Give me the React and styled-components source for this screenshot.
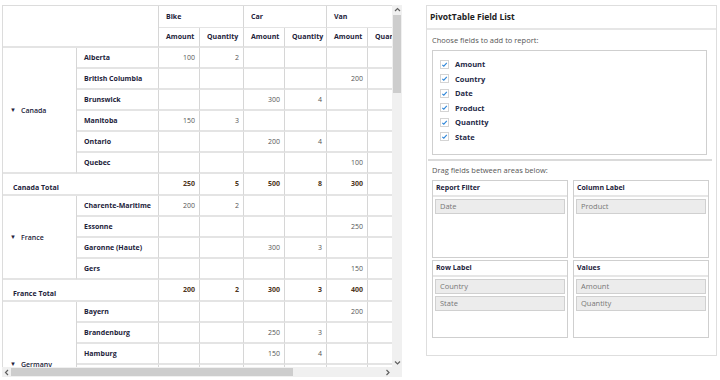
import React from "react";
import styled, { createGlobalStyle } from "styled-components";

const Global = createGlobalStyle`
  html, body { margin: 0; padding: 0; background: #fff; }
  body { font-family: "Open Sans", "Noto Sans", sans-serif; }
`;

const Page = styled.div`
  display: flex;
  align-items: flex-start;
  gap: 24px;
  padding: 5px 3px 0 2px;
  width: 720px;
  height: 380px;
  box-sizing: border-box;
`;

// ---------- pivot grid ----------

const GridFrame = styled.div`
  display: grid;
  grid-template-columns: 390px 10px;
  grid-template-rows: 362px 10px;
  width: 400px;
`;

const Viewport = styled.div`
  overflow: hidden;
  border-top: 1px solid #dcdcdc;
  border-left: 1px solid #dcdcdc;
`;

const Table = styled.table`
  border-collapse: separate;
  border-spacing: 0;
  table-layout: fixed;
  width: 406px;
  font-size: 7px;
  color: #222233;
`;

const Cell = styled.td`
  padding: 0;
  border-right: 1px solid #d6d6d6;
  border-bottom: ${(p) => (p.$thin ? "1px" : "2px")} solid #e4e4e4;
  vertical-align: ${(p) => p.$valign || "middle"};
  text-align: ${(p) => (p.$num ? "right" : "left")};
  font-weight: ${(p) => (p.$bold ? 700 : 400)};
  color: ${(p) => (p.$total ? "#4e3620" : p.$num ? "#555" : "#22223a")};
  white-space: nowrap;
  overflow: hidden;
`;

const Inner = styled.div`
  height: ${(p) => p.$h}px;
  line-height: ${(p) => p.$h}px;
  padding: ${(p) => (p.$num ? "0 4px 0 0" : "0 0 0 7px")};
  box-sizing: border-box;
`;

const GroupLabel = styled.div`
  padding-left: 7px;
  font-weight: 600;
`;

const TotalLabel = styled.div`
  height: 20px;
  padding: 9px 0 0 10px;
  box-sizing: border-box;
  line-height: 10px;
`;

const Caret = styled.span`
  font-size: 6px;
  margin-right: 5px;
  position: relative;
  top: -1px;
`;

const VScroll = styled.div`
  background: #f0f0f0;
  display: flex;
  flex-direction: column;
  align-items: center;
  justify-content: space-between;
  position: relative;
`;

const VThumb = styled.div`
  position: absolute;
  top: 10px;
  left: 1px;
  width: 8px;
  height: 78px;
  background: #cdcdcd;
`;

const HScroll = styled.div`
  background: #f0f0f0;
  display: flex;
  align-items: center;
  justify-content: space-between;
  position: relative;
`;

const HThumb = styled.div`
  position: absolute;
  left: 9px;
  top: 1px;
  height: 8px;
  width: 282px;
  background: #cdcdcd;
`;

const Corner = styled.div`
  background: #f0f0f0;
`;

const Arrow = ({ dir }) => {
  const pts = {
    up: "2,6 4.5,3.5 7,6",
    down: "2,3.5 4.5,6 7,3.5",
    left: "6,2 3.5,4.5 6,7",
    right: "3.5,2 6,4.5 3.5,7",
  }[dir];
  return (
    <svg width="9" height="9" viewBox="0 0 9 9" style={{ position: "relative", zIndex: 1 }}>
      <polyline points={pts} fill="none" stroke="#606060" strokeWidth="1.2" />
    </svg>
  );
};

const cols = [74, 82, 41, 44, 41, 42, 41, 41];

const groups = [
  {
    name: "Canada",
    rows: [
      ["Alberta", [100, 2, "", "", "", ""]],
      ["British Columbia", ["", "", "", "", 200, ""]],
      ["Brunswick", ["", "", 300, 4, "", ""]],
      ["Manitoba", [150, 3, "", "", "", ""]],
      ["Ontario", ["", "", 200, 4, "", ""]],
      ["Quebec", ["", "", "", "", 100, ""]],
    ],
    total: [250, 5, 500, 8, 300, 3],
  },
  {
    name: "France",
    rows: [
      ["Charente-Maritime", [200, 2, "", "", "", ""]],
      ["Essonne", ["", "", "", "", 250, ""]],
      ["Garonne (Haute)", ["", "", 300, 3, "", ""]],
      ["Gers", ["", "", "", "", 150, ""]],
    ],
    total: [200, 2, 300, 3, 400, 5],
  },
  {
    name: "Germany",
    rows: [
      ["Bayern", ["", "", "", "", 200, ""]],
      ["Brandenburg", ["", "", 250, 3, "", ""]],
      ["Hamburg", ["", "", 150, 4, "", ""]],
      ["Hessen", [300, 2, "", "", "", ""]],
      ["Niedersachsen", ["", "", "", "", 100, ""]],
      ["Saarland", ["", "", 200, 1, "", ""]],
    ],
    total: [300, 2, 600, 8, 300, 4],
  },
];

const PivotGrid = () => (
  <GridFrame>
    <Viewport>
      <Table>
        <colgroup>
          {cols.map((w, i) => (
            <col key={i} style={{ width: w }} />
          ))}
        </colgroup>
        <thead>
          <tr>
            <Cell as="th" colSpan={2} rowSpan={2} />
            {["Bike", "Car", "Van"].map((p) => (
              <Cell as="th" key={p} colSpan={2} $bold $thin>
                <Inner $h={21}>{p}</Inner>
              </Cell>
            ))}
          </tr>
          <tr>
            {[0, 1, 2].flatMap((i) => [
              <Cell as="th" key={"a" + i} $bold>
                <Inner $h={18}>Amount</Inner>
              </Cell>,
              <Cell as="th" key={"q" + i} $bold>
                <Inner $h={18}>Quantity</Inner>
              </Cell>,
            ])}
          </tr>
        </thead>
        <tbody>
          {groups.map((g) => (
            <React.Fragment key={g.name}>
              {g.rows.map(([state, vals], ri) => (
                <tr key={state}>
                  {ri === 0 && (
                    <Cell rowSpan={g.rows.length}>
                      <GroupLabel>
                        <Caret>▼</Caret>
                        {g.name}
                      </GroupLabel>
                    </Cell>
                  )}
                  <Cell $bold>
                    <Inner $h={19}>{state}</Inner>
                  </Cell>
                  {vals.map((v, vi) => (
                    <Cell key={vi} $num>
                      <Inner $h={19} $num>
                        {v}
                      </Inner>
                    </Cell>
                  ))}
                </tr>
              ))}
              <tr>
                <Cell colSpan={2} $bold>
                  <TotalLabel>{g.name} Total</TotalLabel>
                </Cell>
                {g.total.map((v, vi) => (
                  <Cell key={vi} $num $bold $total>
                    <Inner $h={20} $num>
                      {v}
                    </Inner>
                  </Cell>
                ))}
              </tr>
            </React.Fragment>
          ))}
        </tbody>
      </Table>
    </Viewport>
    <VScroll>
      <VThumb />
      <Arrow dir="up" />
      <Arrow dir="down" />
    </VScroll>
    <HScroll>
      <HThumb />
      <Arrow dir="left" />
      <Arrow dir="right" />
    </HScroll>
    <Corner />
  </GridFrame>
);

// ---------- field list ----------

const Panel = styled.div`
  width: 291px;
  height: 351px;
  border: 1px solid #dedede;
  box-sizing: border-box;
  display: flex;
  flex-direction: column;
`;

const PanelHeader = styled.div`
  height: 22px;
  line-height: 22px;
  padding-left: 3px;
  font-size: 8.5px;
  font-weight: 700;
  color: #222;
  border-bottom: 2px solid #e6e6e6;
`;

const Hint = styled.div`
  font-size: 7.5px;
  color: #555;
  padding-left: 5px;
  height: ${(p) => p.$h}px;
  line-height: ${(p) => p.$h}px;
`;

const FieldBox = styled.div`
  margin: 0 0 0 5px;
  width: 275px;
  height: 105px;
  border: 1px solid #cfcfcf;
  box-sizing: border-box;
  padding: 6px 0 0 7px;
  display: flex;
  flex-direction: column;
`;

const FieldRow = styled.label`
  display: flex;
  align-items: center;
  gap: 6px;
  height: 14.5px;
  font-size: 7.5px;
  font-weight: 700;
  color: #1f2a48;
`;

const Box = styled.span`
  width: 9px;
  height: 9px;
  border: 1px solid #d4d4d4;
  box-sizing: border-box;
  background: #fff;
  display: flex;
  align-items: center;
  justify-content: center;
`;

const Divider = styled.div`
  margin: 4px 4px 0 1px;
  border-top: 2px solid #dadada;
`;

const Areas = styled.div`
  display: grid;
  grid-template-columns: 136px 136px;
  grid-template-rows: 78px 78px;
  column-gap: 5px;
  row-gap: 2px;
  margin-left: 5px;
`;

const Area = styled.div`
  border: 1px solid #cfcfcf;
  box-sizing: border-box;
  display: flex;
  flex-direction: column;
  gap: 2px;
`;

const AreaTitle = styled.div`
  height: 14px;
  line-height: 14px;
  padding-left: 3px;
  font-size: 7px;
  font-weight: 700;
  color: #22223a;
  border-bottom: 2px solid #e6e6e6;
`;

const Chip = styled.div`
  margin: 0 2px;
  height: 15px;
  line-height: 13px;
  padding-left: 4px;
  background: #ececec;
  border: 1px solid #d0d0d0;
  box-sizing: border-box;
  font-size: 7.5px;
  color: #777;
`;

const Check = () => (
  <svg width="7" height="7" viewBox="0 0 7 7">
    <polyline points="1.3,3.8 2.8,5.2 5.8,1.8" fill="none" stroke="#2f86d8" strokeWidth="1.1" />
  </svg>
);

const fields = ["Amount", "Country", "Date", "Product", "Quantity", "State"];

const areas = [
  { title: "Report Filter", items: ["Date"] },
  { title: "Column Label", items: ["Product"] },
  { title: "Row Label", items: ["Country", "State"] },
  { title: "Values", items: ["Amount", "Quantity"] },
];

const FieldList = () => (
  <Panel>
    <PanelHeader>PivotTable Field List</PanelHeader>
    <Hint $h={20}>Choose fields to add to report:</Hint>
    <FieldBox>
      {fields.map((f) => (
        <FieldRow key={f}>
          <Box>
            <Check />
          </Box>
          {f}
        </FieldRow>
      ))}
    </FieldBox>
    <Divider />
    <Hint $h={19}>Drag fields between areas below:</Hint>
    <Areas>
      {areas.map((a) => (
        <Area key={a.title}>
          <AreaTitle>{a.title}</AreaTitle>
          {a.items.map((i) => (
            <Chip key={i}>{i}</Chip>
          ))}
        </Area>
      ))}
    </Areas>
  </Panel>
);

const App = () => (
  <>
    <Global />
    <Page>
      <PivotGrid />
      <FieldList />
    </Page>
  </>
);

export default App;
